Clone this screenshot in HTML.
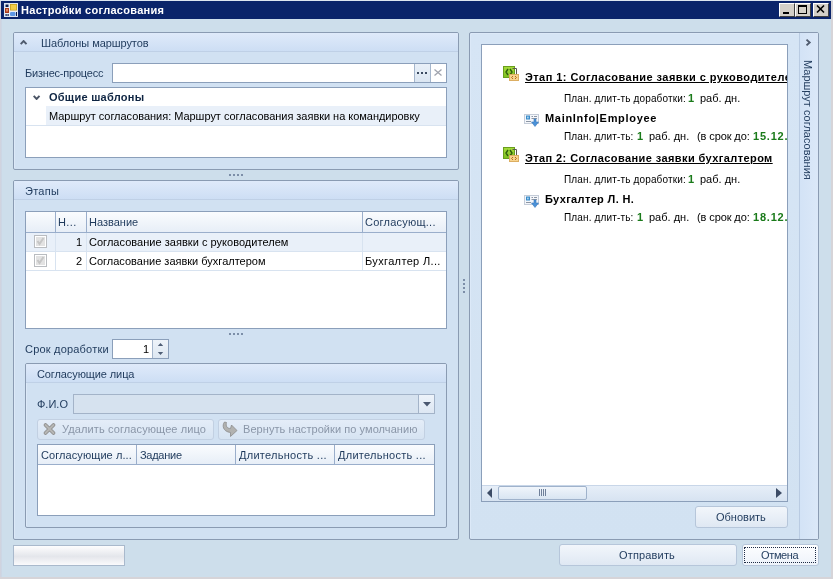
<!DOCTYPE html>
<html><head><meta charset="utf-8">
<style>
*{margin:0;padding:0;box-sizing:border-box}
html,body{width:833px;height:579px;overflow:hidden}
body{position:relative;background:#cddeeb;font-family:"Liberation Sans",sans-serif;font-size:11px;color:#1e395b}
.a{position:absolute}
.t{position:absolute;white-space:nowrap;line-height:13px;will-change:transform}
.grp{position:absolute;border:1px solid #8a9bb2;border-radius:2px;background:#d1e1f2;box-shadow:inset 1px 1px 0 #dce9f8}
.gh{position:absolute;left:0;right:0;top:0;height:19px;background:linear-gradient(#dfeafa,#cddef4);border-bottom:1px solid #bfd0e6;border-radius:1px 1px 0 0}
.box{position:absolute;border:1px solid #8b9fba;background:#fff}
.btn{position:absolute;border:1px solid #b6c6da;border-radius:3px;background:linear-gradient(#f2f6fb,#dfe8f3)}
.b{font-weight:bold}.g{color:#1a7a1a}.s{font-size:10px}
.dots{position:absolute;height:2px;background:repeating-linear-gradient(90deg,#7c8ea8 0 2px,transparent 2px 4px)}
</style></head><body>
<!-- frame -->
<div class="a" style="left:0;top:0;width:2px;height:579px;background:linear-gradient(90deg,#d2d2dc,#cad8e8)"></div>
<div class="a" style="left:831px;top:0;width:2px;height:579px;background:#d6d4d8"></div>
<div class="a" style="left:0;top:577px;width:833px;height:2px;background:#d6d4d8"></div>
<div class="a" style="left:0;top:0;width:833px;height:1px;background:#dde6f0"></div>
<!-- title bar -->
<div class="a" style="left:1px;top:1px;width:830px;height:18px;background:#0a246a"></div>
<svg class="a" style="left:4px;top:3px" width="14" height="14" viewBox="0 0 14 14">
<rect x="0" y="0" width="14" height="14" fill="#dfe6f0"/>
<rect x="1" y="1" width="12" height="12" fill="#e9eef6"/>
<rect x="1.5" y="1.5" width="3" height="2.5" fill="#0c1c4c"/>
<rect x="1" y="5" width="4" height="5" fill="#a83a1c"/>
<rect x="2" y="6" width="2" height="2.5" fill="#e08a60"/>
<rect x="6" y="1" width="7" height="6.5" fill="#c9a021"/>
<rect x="6.8" y="1.8" width="5.4" height="5" fill="#f5cf48"/>
<rect x="6" y="9" width="5.5" height="4" rx="1.2" fill="#5e98e6"/>
<rect x="1.5" y="11" width="1.2" height="2" fill="#0c1c4c"/>
<rect x="3.5" y="11" width="1.2" height="2" fill="#0c1c4c"/>
<rect x="12" y="9" width="1" height="4" fill="#0c1c4c"/>
</svg>
<div class="t" style="left:21px;top:4px;color:#fff;font-weight:bold;font-size:11px;letter-spacing:0.3px">Настройки согласования</div>
<!-- caption buttons -->
<div class="a" style="left:779px;top:3px;width:16px;height:14px;background:#d4d0c8;border-top:1px solid #fff;border-left:1px solid #fff;border-right:1px solid #404040;border-bottom:1px solid #404040"></div>
<div class="a" style="left:783px;top:12px;width:6px;height:2px;background:#000"></div>
<div class="a" style="left:795px;top:3px;width:16px;height:14px;background:#d4d0c8;border-top:1px solid #fff;border-left:1px solid #fff;border-right:1px solid #404040;border-bottom:1px solid #404040"></div>
<div class="a" style="left:798px;top:5px;width:9px;height:9px;border:1px solid #000;border-top-width:2px"></div>
<div class="a" style="left:813px;top:3px;width:16px;height:14px;background:#d4d0c8;border-top:1px solid #fff;border-left:1px solid #fff;border-right:1px solid #404040;border-bottom:1px solid #404040"></div>
<svg class="a" style="left:816px;top:5px" width="10" height="9" viewBox="0 0 10 9"><path d="M1 0.5 L8 7.5 M8 0.5 L1 7.5" stroke="#000" stroke-width="1.6"/></svg>

<!-- GROUP 1 -->
<div class="grp" style="left:13px;top:32px;width:446px;height:138px">
  <div class="gh"></div>
</div>
<svg class="a" style="left:20px;top:40px" width="8" height="5" viewBox="0 0 8 5"><path d="M0.7 4.2 L3.6 1 L6.5 4.2" fill="none" stroke="#4f5b6e" stroke-width="1.9"/></svg>
<div class="t" style="left:41px;top:37px;letter-spacing:-0.07px">Шаблоны маршрутов</div>
<div class="t" style="left:25px;top:67px;letter-spacing:-0.21px">Бизнес-процесс</div>
<div class="box" style="left:112px;top:63px;width:335px;height:20px"></div>
<div class="a" style="left:414px;top:64px;width:16px;height:18px;background:linear-gradient(#e9f0f8,#dbe6f2);border-left:1px solid #a5b6cc"></div>
<div class="a" style="left:417px;top:72px;width:2px;height:2px;background:#3b4a60;box-shadow:4px 0 #3b4a60,8px 0 #3b4a60"></div>
<div class="a" style="left:430px;top:64px;width:16px;height:18px;background:#fff;border-left:1px solid #a5b6cc"></div>
<svg class="a" style="left:434px;top:69px" width="8" height="7" viewBox="0 0 8 7"><path d="M0.5 0.5 L7.5 6.5 M7.5 0.5 L0.5 6.5" stroke="#a0a4ae" stroke-width="1.3"/></svg>
<div class="box" style="left:25px;top:87px;width:422px;height:71px"></div>
<svg class="a" style="left:33px;top:95px" width="8" height="5" viewBox="0 0 8 5"><path d="M0.7 0.8 L3.6 4 L6.5 0.8" fill="none" stroke="#4b5566" stroke-width="1.9"/></svg>
<div class="t" style="left:49px;top:91px;font-weight:bold;color:#0e2442;letter-spacing:0.26px">Общие шаблоны</div>
<div class="a" style="left:46px;top:106px;width:400px;height:19px;background:#e9f0f9"></div>
<div class="a" style="left:26px;top:125px;width:420px;height:1px;background:#d8e3f0"></div>
<div class="t" style="left:49px;top:110px;color:#000;letter-spacing:-0.03px">Маршрут согласования: Маршрут согласования заявки на командировку</div>
<div class="dots" style="left:229px;top:174px;width:14px"></div>

<!-- GROUP 2 -->
<div class="grp" style="left:13px;top:180px;width:446px;height:360px">
  <div class="gh"></div>
</div>
<div class="t" style="left:25px;top:185px;letter-spacing:0.27px">Этапы</div>
<div class="box" style="left:25px;top:211px;width:422px;height:118px"></div>
<div class="a" style="left:26px;top:212px;width:420px;height:21px;background:linear-gradient(#fafcfe,#e7eef7);border-bottom:1px solid #9aaecb"></div>
<div class="a" style="left:55px;top:212px;width:1px;height:20px;background:#9aaecb"></div>
<div class="a" style="left:86px;top:212px;width:1px;height:20px;background:#9aaecb"></div>
<div class="a" style="left:362px;top:212px;width:1px;height:20px;background:#9aaecb"></div>
<div class="t" style="left:58px;top:216px;letter-spacing:0.4px">Н...</div>
<div class="t" style="left:89px;top:216px">Название</div>
<div class="t" style="left:365px;top:216px;letter-spacing:0.24px">Согласующ...</div>
<!-- rows -->
<div class="a" style="left:26px;top:233px;width:420px;height:18px;background:#e9f0f9"></div>
<div class="a" style="left:26px;top:251px;width:420px;height:1px;background:#d8e3f0"></div>
<div class="a" style="left:26px;top:270px;width:420px;height:1px;background:#d8e3f0"></div>
<div class="a" style="left:55px;top:233px;width:1px;height:38px;background:#d8e3f0"></div>
<div class="a" style="left:86px;top:233px;width:1px;height:38px;background:#d8e3f0"></div>
<div class="a" style="left:362px;top:233px;width:1px;height:38px;background:#d8e3f0"></div>
<svg class="a" style="left:34px;top:235px" width="13" height="13" viewBox="0 0 13 13"><rect x="0.5" y="0.5" width="12" height="12" fill="#fff" stroke="#b9bcc0"/><rect x="2" y="2" width="9" height="9" fill="#e2e2e2"/><path d="M3.5 6 L5.5 9 L9.5 3" fill="none" stroke="#c6c6c6" stroke-width="2"/></svg>
<svg class="a" style="left:34px;top:254px" width="13" height="13" viewBox="0 0 13 13"><rect x="0.5" y="0.5" width="12" height="12" fill="#fff" stroke="#b9bcc0"/><rect x="2" y="2" width="9" height="9" fill="#e2e2e2"/><path d="M3.5 6 L5.5 9 L9.5 3" fill="none" stroke="#c6c6c6" stroke-width="2"/></svg>
<div class="t" style="left:76px;top:236px;color:#000">1</div>
<div class="t" style="left:89px;top:236px;color:#000;letter-spacing:0.03px">Согласование заявки с руководителем</div>
<div class="t" style="left:76px;top:255px;color:#000">2</div>
<div class="t" style="left:89px;top:255px;color:#000">Согласование заявки бухгалтером</div>
<div class="t" style="left:365px;top:255px;color:#000;letter-spacing:0.35px">Бухгалтер Л...</div>
<div class="dots" style="left:229px;top:333px;width:14px"></div>

<div class="t" style="left:25px;top:343px;letter-spacing:0.2px">Срок доработки</div>
<div class="box" style="left:112px;top:339px;width:57px;height:20px"></div>
<div class="a" style="left:152px;top:340px;width:16px;height:18px;background:linear-gradient(#eef3f9,#dde7f2);border-left:1px solid #a5b6cc"></div>
<svg class="a" style="left:157px;top:342px" width="8" height="14" viewBox="0 0 8 14"><path d="M0.8 4 L3.5 1 L6.2 4 Z M0.8 10 L3.5 13 L6.2 10 Z" fill="#4f5e76"/></svg>
<div class="t" style="left:143px;top:343px;color:#000">1</div>

<!-- GROUP 3 -->
<div class="grp" style="left:25px;top:363px;width:422px;height:165px">
  <div class="gh" style="height:19px"></div>
</div>
<div class="t" style="left:37px;top:368px;letter-spacing:-0.1px">Согласующие лица</div>
<div class="t" style="left:37px;top:398px">Ф.И.О</div>
<div class="a" style="left:73px;top:394px;width:362px;height:20px;border:1px solid #a3b3c8;background:#d6e2ef"></div>
<div class="a" style="left:418px;top:395px;width:16px;height:18px;background:linear-gradient(#edf3fa,#dde7f3);border-left:1px solid #a3b3c8"></div>
<svg class="a" style="left:423px;top:402px" width="8" height="5" viewBox="0 0 8 5"><path d="M0 0 L8 0 L4 4.5 Z" fill="#4a5870"/></svg>
<div class="btn" style="left:37px;top:419px;width:177px;height:21px;border-color:#c2d0e2;background:linear-gradient(#e4edf8,#d6e3f2)"></div>
<svg class="a" style="left:42px;top:422px" width="15" height="14" viewBox="0 0 15 14"><path d="M3.5 3 L11.5 11 M11.5 3 L3.5 11" stroke="#8e8e8e" stroke-width="3.8" stroke-linecap="round"/><path d="M3.5 3 L11.5 11 M11.5 3 L3.5 11" stroke="#b6b6b4" stroke-width="2" stroke-linecap="round"/></svg>
<div class="t" style="left:62px;top:423px;color:#8a96a8;letter-spacing:0.11px">Удалить согласующее лицо</div>
<div class="btn" style="left:218px;top:419px;width:207px;height:21px;border-color:#c2d0e2;background:linear-gradient(#e4edf8,#d6e3f2)"></div>
<svg class="a" style="left:222px;top:421px" width="16" height="17" viewBox="0 0 16 17"><path d="M2.5 1 C0 4 0.5 10.5 8.5 11.5 L8.5 15.5 L15 9.5 L9.5 4 L8.5 7.5 C5 7.5 3.5 5 4.5 1.5 Z" fill="#b2b2b0" stroke="#8a8a8a" stroke-width="0.8" stroke-linejoin="round"/></svg>
<div class="t" style="left:243px;top:423px;color:#8a96a8;letter-spacing:0.065px">Вернуть настройки по умолчанию</div>
<div class="box" style="left:37px;top:444px;width:398px;height:72px"></div>
<div class="a" style="left:38px;top:445px;width:396px;height:20px;background:linear-gradient(#fafcfe,#e7eef7);border-bottom:1px solid #9aaecb"></div>
<div class="a" style="left:136px;top:445px;width:1px;height:20px;background:#9aaecb"></div>
<div class="a" style="left:235px;top:445px;width:1px;height:20px;background:#9aaecb"></div>
<div class="a" style="left:334px;top:445px;width:1px;height:20px;background:#9aaecb"></div>
<div class="t" style="left:41px;top:449px;letter-spacing:0.08px">Согласующие л...</div>
<div class="t" style="left:140px;top:449px;letter-spacing:-0.27px">Задание</div>
<div class="t" style="left:239px;top:449px;letter-spacing:0.27px">Длительность ...</div>
<div class="t" style="left:338px;top:449px;letter-spacing:0.27px">Длительность ...</div>

<!-- progress -->
<div class="a" style="left:13px;top:545px;width:112px;height:21px;border:1px solid #a9b9cc;background:linear-gradient(#fdfdfe,#e4e6eb 55%,#fafafc)"></div>

<!-- vertical splitter dots -->
<div class="a" style="left:463px;top:279px;width:2px;height:14px;background:repeating-linear-gradient(180deg,#7c8ea8 0 2px,transparent 2px 4px)"></div>

<!-- RIGHT PANEL -->
<div class="grp" style="left:469px;top:32px;width:350px;height:508px;background:linear-gradient(#d6e5f5,#d2e2f2)"></div>
<div class="a" style="left:799px;top:33px;width:19px;height:506px;background:linear-gradient(90deg,#d3e3f6,#dbe8f8);border-left:1px solid #b9cbe2"></div>
<svg class="a" style="left:805px;top:38px" width="7" height="9" viewBox="0 0 7 9"><path d="M1.5 1.6 L4.7 4.5 L1.5 7.4" fill="none" stroke="#4f5b6e" stroke-width="1.9"/></svg>
<div class="t" style="left:748px;top:113px;width:119px;transform:rotate(90deg);transform-origin:center;text-align:left">Маршрут согласования</div>
<div class="box" style="left:481px;top:44px;width:307px;height:458px;overflow:hidden">
</div>
<!-- scrollbar -->
<div class="a" style="left:482px;top:485px;width:305px;height:16px;background:linear-gradient(#e6eef8,#d7e3f1);border-top:1px solid #c8d6e8"></div>
<svg class="a" style="left:487px;top:488px" width="5" height="10" viewBox="0 0 5 10"><path d="M5 0 L0 5 L5 10 Z" fill="#3d4c66"/></svg>
<svg class="a" style="left:776px;top:488px" width="6" height="10" viewBox="0 0 6 10"><path d="M0 0 L6 5 L0 10 Z" fill="#3d4c66"/></svg>
<div class="a" style="left:498px;top:486px;width:89px;height:14px;border:1px solid #9fb2cb;border-radius:2px;background:linear-gradient(#f0f5fb,#d9e5f2)"></div>
<div class="a" style="left:539px;top:489px;width:1px;height:7px;background:#6f809a;box-shadow:2px 0 #6f809a,4px 0 #6f809a,6px 0 #6f809a"></div>

<!-- right panel content -->
<div class="a" style="left:482px;top:45px;width:305px;height:440px;overflow:hidden">
<svg class="a" style="left:21px;top:21px" width="17" height="17" viewBox="0 0 17 17"><defs><linearGradient id="gg" x1="0" y1="0" x2="0" y2="1"><stop offset="0" stop-color="#a6dc3c"/><stop offset="1" stop-color="#7cbf1e"/></linearGradient></defs><rect x="0.5" y="0.5" width="11" height="11" fill="url(#gg)" stroke="#6a9e1c"/><path d="M5 3 L3 6 L5 9 M7 3 L9 6 L7 9" fill="none" stroke="#2f5c0c" stroke-width="1.4"/><path d="M9.5 2.5 H13.5 V9" fill="none" stroke="#5a5a50" stroke-width="1"/><rect x="6.5" y="8.5" width="9" height="6" fill="#f8d48e" stroke="#dcae62"/><path d="M10 10 L8.6 11.5 L10 13 M12 10 L13.4 11.5 L12 13" fill="none" stroke="#b06a1c" stroke-width="1"/></svg>
<div class="t b" style="left:43px;top:26px;text-decoration:underline;color:#000;letter-spacing:0.45px">Этап 1: Согласование заявки с руководителем</div>
<div class="t s" style="left:82px;top:47px;color:#000;letter-spacing:0.15px">План. длит-ть доработки:</div>
<div class="t b g" style="left:206px;top:47px">1</div>
<div class="t" style="left:218px;top:47px;color:#000">раб. дн.</div>
<svg class="a" style="left:42px;top:69px" width="16" height="14" viewBox="0 0 16 14"><rect x="0.5" y="0.5" width="14" height="9" fill="#f4f6fa" stroke="#c4ccd8"/><rect x="2" y="1.5" width="4" height="4" fill="#3a8bc8"/><rect x="3.2" y="2.6" width="1.4" height="1.8" fill="#bfe4ff"/><path d="M7.5 2.5 H9 M10 2.5 H13 M7.5 4.5 H13 M2 7.5 H7" stroke="#8c96a4" stroke-width="1"/><path d="M10 5 H12 V8 H14.5 L11 12.5 L7.5 8 H10 Z" fill="#4b92d8" stroke="#3a78bc" stroke-width="0.6"/></svg>
<div class="t b" style="left:63px;top:67px;color:#000;letter-spacing:0.7px">MainInfo|Employee</div>
<div class="t s" style="left:82px;top:85px;color:#000;letter-spacing:0.15px">План. длит-ть:</div>
<div class="t b g" style="left:155px;top:85px">1</div>
<div class="t" style="left:167px;top:85px;color:#000">раб. дн.</div>
<div class="t" style="left:215px;top:85px;color:#000;letter-spacing:-0.1px">(в срок до:</div>
<div class="t b g" style="left:271px;top:85px;letter-spacing:0.8px">15.12.2014</div>
<svg class="a" style="left:21px;top:102px" width="17" height="17" viewBox="0 0 17 17"><defs><linearGradient id="gg" x1="0" y1="0" x2="0" y2="1"><stop offset="0" stop-color="#a6dc3c"/><stop offset="1" stop-color="#7cbf1e"/></linearGradient></defs><rect x="0.5" y="0.5" width="11" height="11" fill="url(#gg)" stroke="#6a9e1c"/><path d="M5 3 L3 6 L5 9 M7 3 L9 6 L7 9" fill="none" stroke="#2f5c0c" stroke-width="1.4"/><path d="M9.5 2.5 H13.5 V9" fill="none" stroke="#5a5a50" stroke-width="1"/><rect x="6.5" y="8.5" width="9" height="6" fill="#f8d48e" stroke="#dcae62"/><path d="M10 10 L8.6 11.5 L10 13 M12 10 L13.4 11.5 L12 13" fill="none" stroke="#b06a1c" stroke-width="1"/></svg>
<div class="t b" style="left:43px;top:107px;text-decoration:underline;color:#000;letter-spacing:0.41px">Этап 2: Согласование заявки бухгалтером</div>
<div class="t s" style="left:82px;top:128px;color:#000;letter-spacing:0.15px">План. длит-ть доработки:</div>
<div class="t b g" style="left:206px;top:128px">1</div>
<div class="t" style="left:218px;top:128px;color:#000">раб. дн.</div>
<svg class="a" style="left:42px;top:150px" width="16" height="14" viewBox="0 0 16 14"><rect x="0.5" y="0.5" width="14" height="9" fill="#f4f6fa" stroke="#c4ccd8"/><rect x="2" y="1.5" width="4" height="4" fill="#3a8bc8"/><rect x="3.2" y="2.6" width="1.4" height="1.8" fill="#bfe4ff"/><path d="M7.5 2.5 H9 M10 2.5 H13 M7.5 4.5 H13 M2 7.5 H7" stroke="#8c96a4" stroke-width="1"/><path d="M10 5 H12 V8 H14.5 L11 12.5 L7.5 8 H10 Z" fill="#4b92d8" stroke="#3a78bc" stroke-width="0.6"/></svg>
<div class="t b" style="left:63px;top:148px;color:#000;letter-spacing:0.35px">Бухгалтер Л. Н.</div>
<div class="t s" style="left:82px;top:166px;color:#000;letter-spacing:0.15px">План. длит-ть:</div>
<div class="t b g" style="left:155px;top:166px">1</div>
<div class="t" style="left:167px;top:166px;color:#000">раб. дн.</div>
<div class="t" style="left:215px;top:166px;color:#000;letter-spacing:-0.1px">(в срок до:</div>
<div class="t b g" style="left:271px;top:166px;letter-spacing:0.8px">18.12.2014</div>
</div>

<div class="btn" style="left:695px;top:506px;width:93px;height:22px"></div>
<div class="t" style="left:716px;top:511px">Обновить</div>
<div class="btn" style="left:559px;top:544px;width:178px;height:22px"></div>
<div class="t" style="left:619px;top:549px;letter-spacing:0.16px">Отправить</div>
<div class="btn" style="left:742px;top:544px;width:77px;height:22px;background:linear-gradient(#fdfeff,#eef3fa)"></div>
<div class="a" style="left:744px;top:547px;width:72px;height:16px;border:1px dotted #1e2b44"></div>
<div class="t" style="left:761px;top:549px;letter-spacing:-0.35px">Отмена</div>
</body></html>
